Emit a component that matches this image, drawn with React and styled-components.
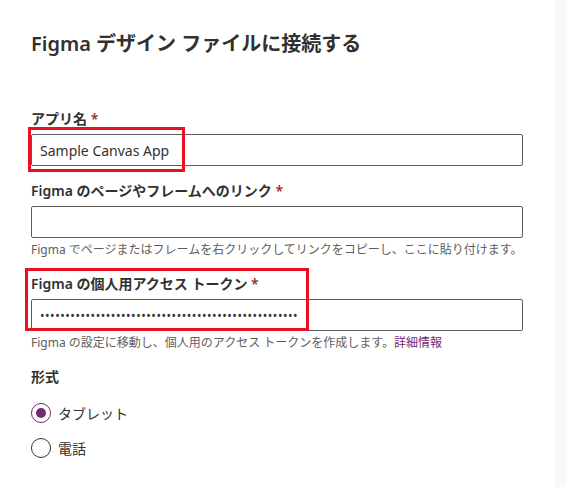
import React from "react"
import styled, { createGlobalStyle } from "styled-components"

const GlobalStyle = createGlobalStyle`
  html, body {
    margin: 0;
    padding: 0;
    background: #ffffff;
  }
  body {
    font-family: "Noto Sans", "Noto Sans CJK JP", sans-serif;
    color: #323130;
  }
`

const TOKEN = "x".repeat(51)

const App = () => {
  return (
    <>
      <GlobalStyle />
      <Page>
        <Panel>
          <Title>Figma デザイン ファイルに接続する</Title>

          <Form>
            <Field>
              <Label>
                アプリ名 <Required>*</Required>
              </Label>
              <InputWrap>
                <Input readOnly defaultValue="Sample Canvas App" />
                <Highlight $top={-7} $left={-3} $width={157} $height={45} />
              </InputWrap>
            </Field>

            <Field>
              <Label>
                Figma のページやフレームへのリンク <Required>*</Required>
              </Label>
              <Input readOnly defaultValue="" />
              <Help>
                Figma でページまたはフレームを右クリックしてリンクをコピーし、ここに貼り付けます。
              </Help>
            </Field>

            <Field>
              <Label>
                Figma の個人用アクセス トークン <Required>*</Required>
              </Label>
              <Input type="password" readOnly defaultValue={TOKEN} $dots />
              <Help>
                Figma の設定に移動し、個人用のアクセス トークンを作成します。
                <Link href="#">詳細情報</Link>
              </Help>
              <Highlight $top={-1} $left={-6} $width={284} $height={63} />
            </Field>

            <Field>
              <Label>形式</Label>
              <Options>
                <Option>
                  <Radio $checked />
                  タブレット
                </Option>
                <Option>
                  <Radio />
                  電話
                </Option>
              </Options>
            </Field>
          </Form>
        </Panel>
        <Side />
      </Page>
    </>
  )
}

const Page = styled.div`
  display: flex;
  width: 566px;
  height: 496px;
  overflow: hidden;
`

const Panel = styled.main`
  flex: 0 0 555px;
  box-sizing: border-box;
  padding: 30px 32px 0 31px;
`

const Side = styled.aside`
  flex: 1;
  height: 487px;
  background: #f8f8f8;
`

const Title = styled.h1`
  margin: 0;
  font-size: 20px;
  line-height: 28px;
  font-weight: 600;
  color: #323130;
  white-space: nowrap;
`

const Form = styled.div`
  display: flex;
  flex-direction: column;
  gap: 10px;
  margin-top: 46px;
`

const Field = styled.div`
  position: relative;
  display: flex;
  flex-direction: column;
`

const Label = styled.label`
  display: block;
  padding: 5px 0;
  font-size: 14px;
  line-height: 20px;
  font-weight: 600;
  color: #323130;
`

const Required = styled.span`
  color: #a4262c;
  font-weight: 600;
`

const InputWrap = styled.div`
  position: relative;
`

const Input = styled.input`
  display: block;
  box-sizing: border-box;
  width: 492px;
  height: 32px;
  margin: 0;
  padding: 0 8px;
  border: 1px solid #605e5c;
  border-radius: 2px;
  background: #ffffff;
  font-family: "Noto Sans", "Noto Sans CJK JP", sans-serif;
  font-size: ${(p) => (p.$dots ? "12px" : "14px")};
  letter-spacing: ${(p) => (p.$dots ? "0.55px" : "normal")};
  color: #323130;
  outline: none;
`

const Help = styled.div`
  padding-top: 3px;
  font-size: 12px;
  line-height: 18px;
  color: #605e5c;
  white-space: nowrap;
`

const Link = styled.a`
  color: #742774;
  text-decoration: none;
`

const Options = styled.div`
  display: flex;
  flex-direction: column;
  gap: 9px;
  margin-top: 8px;
`

const Option = styled.label`
  display: flex;
  align-items: center;
  gap: 7px;
  height: 26px;
  font-size: 14px;
  color: #323130;
`

const Radio = styled.span`
  position: relative;
  box-sizing: border-box;
  width: 20px;
  height: 20px;
  border-radius: 50%;
  border: 1px solid ${(p) => (p.$checked ? "#742774" : "#323130")};
  &::after {
    content: "";
    display: ${(p) => (p.$checked ? "block" : "none")};
    position: absolute;
    left: 4px;
    top: 4px;
    width: 10px;
    height: 10px;
    border-radius: 50%;
    background: #742774;
  }
`

const Highlight = styled.div`
  position: absolute;
  top: ${(p) => p.$top}px;
  left: ${(p) => p.$left}px;
  width: ${(p) => p.$width}px;
  height: ${(p) => p.$height}px;
  box-sizing: border-box;
  border: 3px solid #e81123;
  pointer-events: none;
`

export default App
